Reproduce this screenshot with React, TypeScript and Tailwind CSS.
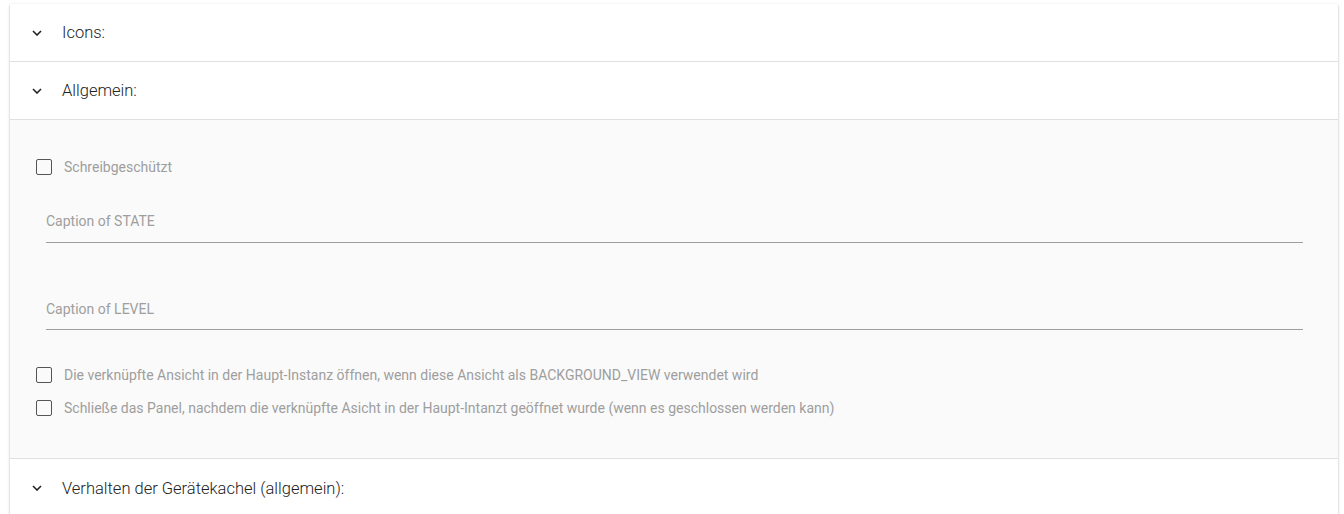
import React from "react";

const Chevron = () => (
  <svg width="10" height="6" viewBox="0 0 10 6" className="shrink-0">
    <path d="M1 1L5 5L9 1" fill="none" stroke="#222" strokeWidth="1.6" />
  </svg>
);

const Header = ({ title, last }: { title: string; last?: boolean }) => (
  <div
    className={
      "flex h-[58px] items-center bg-white pl-[22px] " +
      (last ? "" : "border-b border-[#e0e0e0]")
    }
  >
    <Chevron />
    <span className="ml-[20px] pt-[2px] text-[16.5px] font-light text-[#222]">{title}</span>
  </div>
);

const Check = ({ label }: { label: string }) => (
  <div className="flex h-4 items-center">
    <div className="h-4 w-4 shrink-0 rounded-[2px] border border-[#555]" />
    <span className="ml-3 pt-px text-[14px] text-[#9e9e9e]">{label}</span>
  </div>
);

const Field = ({ label, className }: { label: string; className: string }) => (
  <div className={"ml-[10px] border-b border-[#9e9e9e] " + className}>
    <div className="text-[14px] leading-[20px] text-[#9e9e9e]">{label}</div>
  </div>
);

export default function App() {
  return (
    <div className="min-h-[514px] bg-white pl-[10px] pr-[6px] pt-[4px] font-['Roboto',sans-serif]">
      <div className="bg-white shadow-[0_1px_3px_rgba(0,0,0,0.2),0_1px_1px_rgba(0,0,0,0.14),0_2px_1px_-1px_rgba(0,0,0,0.12)]">
        <Header title="Icons:" />
        <Header title="Allgemein:" />
        <div className="border-b border-[#e0e0e0] bg-[#fafafa] pb-[42px] pl-[26px] pr-[35px] pt-[39px]">
          <Check label="Schreibgeschützt" />
          <Field label="Caption of STATE" className="mt-[36px] pb-[11px]" />
          <Field label="Caption of LEVEL" className="mt-[56px] pb-[10px]" />
          <div className="mt-[37px]">
            <Check label="Die verknüpfte Ansicht in der Haupt-Instanz öffnen, wenn diese Ansicht als BACKGROUND_VIEW verwendet wird" />
          </div>
          <div className="mt-[17px]">
            <Check label="Schließe das Panel, nachdem die verknüpfte Asicht in der Haupt-Intanzt geöffnet wurde (wenn es geschlossen werden kann)" />
          </div>
        </div>
        <Header title="Verhalten der Gerätekachel (allgemein):" last />
      </div>
    </div>
  );
}
